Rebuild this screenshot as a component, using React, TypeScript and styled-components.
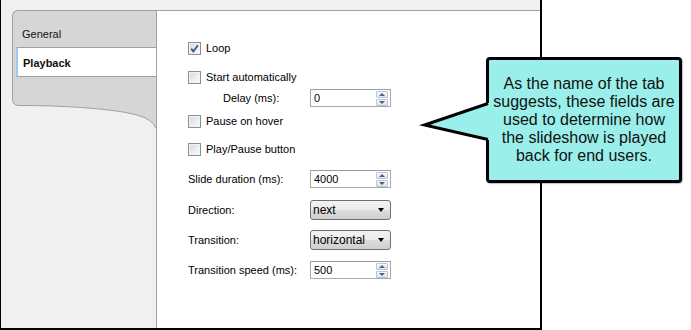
import React from 'react';
import styled, { createGlobalStyle } from 'styled-components';

const GlobalStyle = createGlobalStyle`
  html, body {
    margin: 0;
    padding: 0;
    background: #ffffff;
  }
  body {
    font-family: 'Liberation Sans', Arial, sans-serif;
  }
`;

const Page = styled.div`
  position: relative;
  width: 691px;
  height: 330px;
  overflow: hidden;
  background: #ffffff;
`;

const Window = styled.div`
  box-sizing: border-box;
  width: 542px;
  height: 330px;
  padding-top: 10px;
  display: flex;
  background: #f0f0f0;
  border-left: 1px solid #000;
  border-right: 2px solid #000;
  border-bottom: 2px solid #000;
`;

const Sidebar = styled.div`
  width: 155px;
  padding-left: 11px;
  box-sizing: border-box;
  flex-shrink: 0;
`;

const TabShape = styled.div`
  width: 144px;
  box-sizing: border-box;
  background: #d6d6d6;
  border-top: 1px solid #a0a0a0;
  border-left: 1px solid #a0a0a0;
  border-top-left-radius: 6px;
`;

const Tab = styled.div<{ $active?: boolean }>`
  box-sizing: border-box;
  font-size: 11px;
  line-height: 13px;
  color: #111;
  height: ${(p) => (p.$active ? '30px' : '36px')};
  padding: ${(p) => (p.$active ? '9px 0 0 5px' : '17px 0 0 9px')};
  margin-left: ${(p) => (p.$active ? '3px' : '0')};
  font-weight: ${(p) => (p.$active ? 700 : 400)};
  background: ${(p) => (p.$active ? '#ffffff' : 'transparent')};
  border-top: ${(p) => (p.$active ? '1px solid #a0a0a0' : 'none')};
  border-bottom: ${(p) => (p.$active ? '1px solid #a0a0a0' : 'none')};
  border-left: ${(p) => (p.$active ? '2px solid #9ccaf2' : 'none')};
`;

const Wave = styled.svg`
  display: block;
`;

const Content = styled.div`
  flex: 1;
  background: #ffffff;
  border-top: 1px solid #a0a0a0;
  border-left: 1px solid #a0a0a0;
  padding: 30px 0 0 31px;
  display: flex;
  flex-direction: column;
  font-size: 11px;
  color: #000;
`;

const Row = styled.div<{ $top?: number; $indent?: number }>`
  display: flex;
  align-items: center;
  margin-top: ${(p) => p.$top ?? 0}px;
  padding-left: ${(p) => p.$indent ?? 0}px;
  line-height: 13px;
`;

const Box = styled.span`
  box-sizing: border-box;
  width: 13px;
  height: 13px;
  border: 1px solid #8e8f8f;
  background: linear-gradient(135deg, #d8d8d8 0%, #f2f2f2 70%, #fafafa 100%);
  box-shadow: inset 0 0 0 1px #f4f4f4;
  display: flex;
  align-items: center;
  justify-content: center;
  margin-right: 5px;
`;

const Label = styled.span<{ $width?: number }>`
  display: inline-block;
  width: ${(p) => (p.$width ? `${p.$width}px` : 'auto')};
`;

const Spin = styled.div`
  box-sizing: border-box;
  width: 81px;
  height: 18px;
  border: 1px solid #a9a9a9;
  border-top-color: #9c9c9c;
  background: #fff;
  display: flex;
  align-items: center;
`;

const SpinValue = styled.span`
  flex: 1;
  padding-left: 3px;
`;

const SpinButtons = styled.div`
  display: flex;
  flex-direction: column;
  gap: 1px;
  margin-right: 2px;
`;

const SpinButton = styled.span<{ $down?: boolean }>`
  box-sizing: border-box;
  width: 12px;
  height: 7px;
  border: 1px solid #b8c6d8;
  border-radius: 1px;
  background: linear-gradient(#f6f9fc, #dde5ee);
  display: flex;
  align-items: center;
  justify-content: center;

  &::after {
    content: '';
    width: 0;
    height: 0;
    border-left: 3px solid transparent;
    border-right: 3px solid transparent;
    border-bottom: ${(p) => (p.$down ? 'none' : '3px solid #4b5f80')};
    border-top: ${(p) => (p.$down ? '3px solid #4b5f80' : 'none')};
  }
`;

const Select = styled.div`
  box-sizing: border-box;
  width: 81px;
  height: 20px;
  border: 1px solid #707070;
  border-radius: 3px;
  background: linear-gradient(#f2f2f2 0%, #ebebeb 50%, #dddddd 50%, #cfcfcf 100%);
  display: flex;
  align-items: center;
  padding: 0 6px 0 2px;
  font-size: 12px;

  &::after {
    content: '';
    margin-left: auto;
    border-left: 3.5px solid transparent;
    border-right: 3.5px solid transparent;
    border-top: 4px solid #000;
  }
`;

const Callout = styled.div`
  position: absolute;
  left: 486px;
  top: 57px;
  width: 196px;
  height: 126px;
  box-sizing: border-box;
  border: 3px solid #000;
  border-radius: 4px;
  background: #9aefeb;
  display: flex;
  align-items: center;
  justify-content: center;
  text-align: center;
  font-family: 'Liberation Sans', Arial, sans-serif;
  font-size: 16px;
  color: #111;
  box-shadow: 1px 1px 1px rgba(0, 0, 0, 0.25);
`;

const Pointer = styled.svg`
  position: absolute;
  left: -69px;
  top: 40px;
  overflow: visible;
`;

type CheckProps = { checked?: boolean; label: string; top: number };

function Check({ checked, label, top }: CheckProps) {
  return (
    <Row $top={top}>
      <Box>
        {checked && (
          <svg width="9" height="9" viewBox="0 0 9 9">
            <path d="M1.2 4.6 L3.4 7.4 L7.9 1.2" fill="none" stroke="#3d5a9c" strokeWidth="1.8" />
          </svg>
        )}
      </Box>
      <span>{label}</span>
    </Row>
  );
}

function SpinBox({ value }: { value: string }) {
  return (
    <Spin>
      <SpinValue>{value}</SpinValue>
      <SpinButtons>
        <SpinButton />
        <SpinButton $down />
      </SpinButtons>
    </Spin>
  );
}

export default function App() {
  return (
    <Page>
      <GlobalStyle />
      <Window>
        <Sidebar>
          <TabShape>
            <Tab>General</Tab>
            <Tab $active>Playback</Tab>
          </TabShape>
          <Wave width="144" height="52" viewBox="0 0 144 52">
            <path
              d="M0.5 0 V22 Q0.5 28.5 7 28.5 C60 28.5 105 32.5 125 38 Q140 42 144 51 V0 Z"
              fill="#d6d6d6"
            />
            <path
              d="M0.5 0 V22 Q0.5 28.5 7 28.5 C60 28.5 105 32.5 125 38 Q140 42 144 51"
              fill="none"
              stroke="#a0a0a0"
              strokeWidth="1"
            />
          </Wave>
        </Sidebar>
        <Content>
          <Check checked label="Loop" top={1} />
          <Check label="Start automatically" top={16} />
          <Row $top={5} $indent={35}>
            <Label $width={87}>Delay (ms):</Label>
            <SpinBox value="0" />
          </Row>
          <Check label="Pause on hover" top={8} />
          <Check label="Play/Pause button" top={15} />
          <Row $top={14}>
            <Label $width={122}>Slide duration (ms):</Label>
            <SpinBox value="4000" />
          </Row>
          <Row $top={12}>
            <Label $width={122}>Direction:</Label>
            <Select>next</Select>
          </Row>
          <Row $top={10}>
            <Label $width={122}>Transition:</Label>
            <Select>horizontal</Select>
          </Row>
          <Row $top={11}>
            <Label $width={122}>Transition speed (ms):</Label>
            <SpinBox value="500" />
          </Row>
        </Content>
      </Window>
      <Callout>
        <Pointer width="72" height="43" viewBox="0 0 72 43">
          <polygon points="4,25 68,3 72,3 72,40 68,40" fill="#9aefeb" />
          <polyline
            points="68,3.5 4.5,25 68,39.5"
            fill="none"
            stroke="#000"
            strokeWidth="3"
            strokeLinejoin="miter"
          />
        </Pointer>
        <div>
          As the name of the tab
          <br />
          suggests, these fields are
          <br />
          used to determine how
          <br />
          the slideshow is played
          <br />
          back for end users.
        </div>
      </Callout>
    </Page>
  );
}
